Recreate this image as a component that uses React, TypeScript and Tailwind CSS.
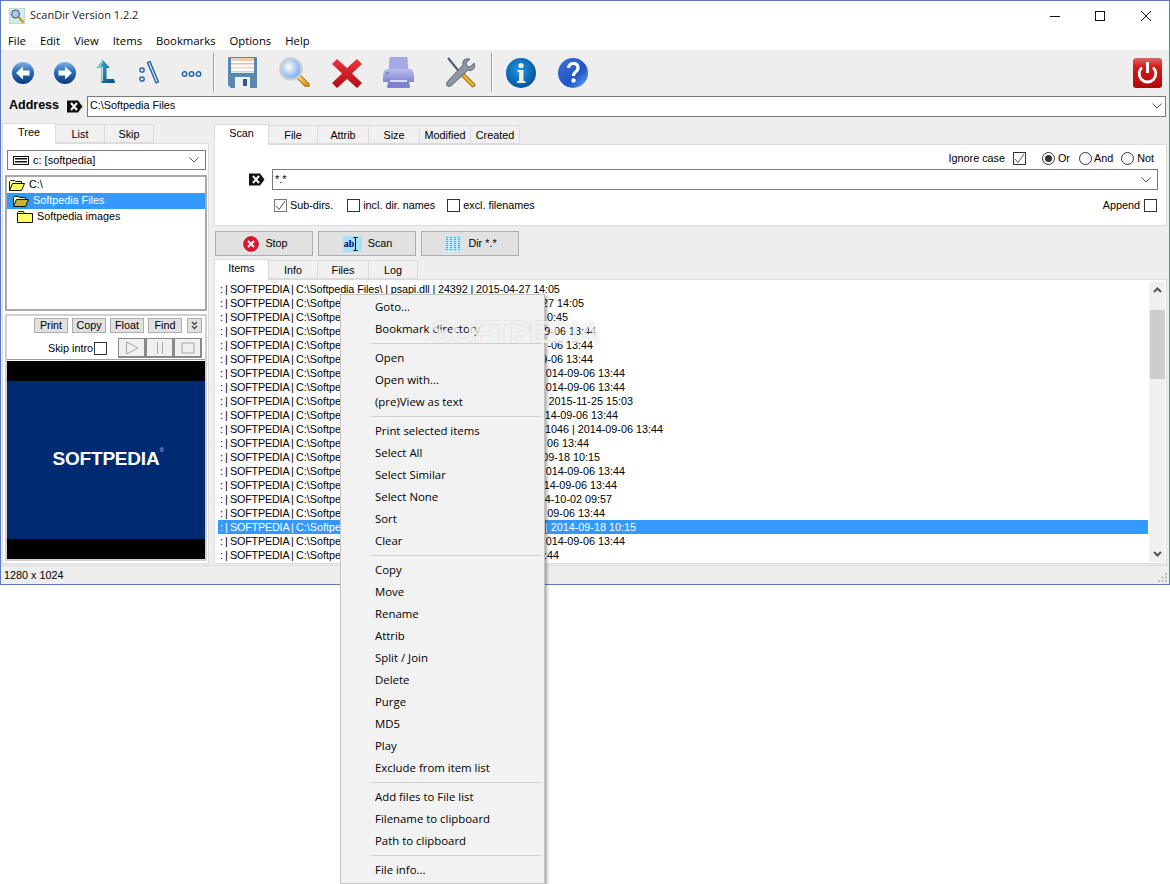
import React from "react";

const sys = "font-['Open_Sans',sans-serif]";
const ui = "font-['Liberation_Sans',sans-serif]";

function Ball({ flip }: { flip?: boolean }) {
  const id = flip ? "ballb" : "balla";
  return (
    <svg width="22" height="22" viewBox="0 0 22 22" className="shrink-0">
      <defs>
        <linearGradient id={id} x1="0" y1="0" x2="0" y2="1">
          <stop offset="0" stopColor="#7fb2e4" />
          <stop offset="0.45" stopColor="#2a6fb8" />
          <stop offset="1" stopColor="#0b3a78" />
        </linearGradient>
      </defs>
      <circle cx="11" cy="11" r="11" fill={`url(#${id})`} />
      <g transform={flip ? "translate(22 0) scale(-1 1)" : undefined}>
        <path d="M11 4.5 L4 11 L11 17.5 L11 13.5 L17.5 13.5 L17.5 8.5 L11 8.5 Z" fill="#fff" />
      </g>
    </svg>
  );
}

function UpIcon() {
  return (
    <svg width="19" height="24" viewBox="0 0 19 24" className="shrink-0">
      <defs>
        <linearGradient id="upg" x1="0" y1="0" x2="1" y2="1">
          <stop offset="0" stopColor="#39b4cf" />
          <stop offset="1" stopColor="#0c4a7d" />
        </linearGradient>
      </defs>
      <path d="M7 0 L14 8 L10.5 8 L10.5 19 L18 19 L19 23 L5.5 23 L5.5 8 L0.5 8 Z" fill="url(#upg)" />
      <path d="M7 2 L2.5 7 L6.5 7 L6.5 21" stroke="#bfe8f2" strokeWidth="1" fill="none" />
    </svg>
  );
}

function RootIcon() {
  return (
    <svg width="20" height="23" viewBox="0 0 20 23" className="shrink-0">
      <circle cx="3" cy="9" r="2.2" fill="#cfe2f5" stroke="#1f5c98" strokeWidth="1.3" />
      <circle cx="3" cy="18" r="2.2" fill="#cfe2f5" stroke="#1f5c98" strokeWidth="1.3" />
      <path d="M8.5 1.5 L11 0.5 L19.5 21 L17 22 Z" fill="#cfe2f5" stroke="#1f5c98" strokeWidth="1.3" />
    </svg>
  );
}

function DotsIcon() {
  return (
    <svg width="21" height="8" viewBox="0 0 21 8" className="shrink-0">
      {[3.5, 10.5, 17.5].map((x) => (
        <circle key={x} cx={x} cy="4" r="2.3" fill="#cfe2f5" stroke="#1f5c98" strokeWidth="1.3" />
      ))}
    </svg>
  );
}

function Floppy() {
  return (
    <svg width="29" height="31" viewBox="0 0 29 31" className="shrink-0">
      <path d="M0 1 Q0 0 1 0 H28 Q29 0 29 1 V31 H3 L0 28 Z" fill="#5a86b0" />
      <rect x="3" y="1" width="23" height="15" fill="#fff" />
      <rect x="3" y="1" width="23" height="3" fill="#f6c9b4" />
      <rect x="3" y="6" width="23" height="1.5" fill="#f3b8a0" />
      <rect x="3" y="10" width="23" height="1.5" fill="#f6d2c2" />
      <rect x="3" y="14" width="23" height="1.5" fill="#c4d3dd" />
      <rect x="7" y="20" width="15" height="11" fill="#eef2f6" />
      <rect x="15" y="22" width="4" height="7" fill="#2e5a85" />
    </svg>
  );
}

function Magnifier() {
  return (
    <svg width="31" height="30" viewBox="0 0 31 30" className="shrink-0">
      <defs>
        <radialGradient id="glass" cx="0.4" cy="0.4" r="0.7">
          <stop offset="0" stopColor="#fff" />
          <stop offset="1" stopColor="#5c9cec" />
        </radialGradient>
        <linearGradient id="hand" x1="0" y1="0" x2="1" y2="1">
          <stop offset="0" stopColor="#ffe48a" />
          <stop offset="1" stopColor="#d98e10" />
        </linearGradient>
      </defs>
      <path d="M19 19 L28 28" stroke="#a8761a" strokeWidth="5.5" strokeLinecap="round" />
      <path d="M19 19 L28 28" stroke="url(#hand)" strokeWidth="3.5" strokeLinecap="round" />
      <circle cx="12" cy="12" r="10.5" fill="url(#glass)" stroke="#c9cdd6" strokeWidth="2.5" />
    </svg>
  );
}

function RedX() {
  return (
    <svg width="30" height="29" viewBox="0 0 30 29" className="shrink-0">
      <defs>
        <linearGradient id="redx" x1="0" y1="0" x2="0" y2="1">
          <stop offset="0" stopColor="#e8353c" />
          <stop offset="1" stopColor="#b40d15" />
        </linearGradient>
      </defs>
      <path d="M5 0 L15 9 L25 0 L30 5 L20 14.5 L30 24 L25 29 L15 20 L5 29 L0 24 L10 14.5 L0 5 Z" fill="url(#redx)" />
    </svg>
  );
}

function Printer() {
  return (
    <svg width="31" height="31" viewBox="0 0 31 31" className="shrink-0">
      <defs>
        <linearGradient id="prn" x1="0" y1="0" x2="0" y2="1">
          <stop offset="0" stopColor="#b9bdf0" />
          <stop offset="1" stopColor="#7f86cf" />
        </linearGradient>
      </defs>
      <path d="M7 0 H24 L25 13 H6 Z" fill="#a5aae6" stroke="#8d93d4" strokeWidth="0.5" />
      <path d="M3 12 H28 Q31 14 31 21 V25 H0 V21 Q0 14 3 12 Z" fill="url(#prn)" />
      <circle cx="4.5" cy="16" r="1.2" fill="#2f9e6a" />
      <path d="M5 25 H26 L27 30 Q27 31 26 31 H5 Q4 31 4 30 Z" fill="#7c82cb" />
      <rect x="7" y="23" width="17" height="2" fill="#d8daf6" />
    </svg>
  );
}

function Tools() {
  return (
    <svg width="31" height="31" viewBox="0 0 31 31" className="shrink-0">
      <path d="M3 1 L17 18" stroke="#4d5a66" strokeWidth="2" />
      <path d="M17 17 L28 28" stroke="#8a5a0a" strokeWidth="4.5" strokeLinecap="round" />
      <path d="M17 17 L28 28" stroke="#f0b820" strokeWidth="2.8" strokeLinecap="round" />
      <path d="M25 2 L21 6 L22 9 L25 10 L29 6 Q31 11 27 13 Q25 14 23 13 L6.5 28.5 Q4 30.5 2.2 28.8 Q0.5 27 2.5 24.5 L18 8 Q17 5 19 3 Q21 1 25 2 Z" fill="#8d98a3" stroke="#45515c" strokeWidth="0.8" />
    </svg>
  );
}

function Info() {
  return (
    <svg width="30" height="30" viewBox="0 0 30 30" className="shrink-0">
      <defs>
        <radialGradient id="inf" cx="0.45" cy="0.4" r="0.7">
          <stop offset="0" stopColor="#1c9be8" />
          <stop offset="1" stopColor="#02468f" />
        </radialGradient>
      </defs>
      <circle cx="15" cy="15" r="15" fill="url(#inf)" />
      <circle cx="15" cy="7.5" r="2.6" fill="#f8eccb" />
      <path d="M11.5 12 H17.5 V23 H19.5 V25 H11 V23 H13 V14 H11.5 Z" fill="#f8eccb" />
    </svg>
  );
}

function Help() {
  return (
    <svg width="30" height="30" viewBox="0 0 30 30" className="shrink-0">
      <defs>
        <linearGradient id="hlp" x1="0" y1="0" x2="1" y2="1">
          <stop offset="0" stopColor="#3d70d0" />
          <stop offset="0.6" stopColor="#1f55c8" />
          <stop offset="1" stopColor="#6fa8ea" />
        </linearGradient>
      </defs>
      <circle cx="15" cy="15" r="15" fill="url(#hlp)" />
      <path d="M10.5 10 Q11 5.5 15.5 5.5 Q20 5.5 20 9.8 Q20 12.5 17.5 14 Q15.5 15.2 15.5 18" fill="none" stroke="#fff" strokeWidth="3.2" />
      <circle cx="15.5" cy="22.5" r="2.2" fill="#fff" />
    </svg>
  );
}

function Power() {
  return (
    <svg width="29" height="30" viewBox="0 0 29 30" className="shrink-0">
      <defs>
        <linearGradient id="pw" x1="0" y1="0" x2="0" y2="1">
          <stop offset="0" stopColor="#d9686a" />
          <stop offset="0.3" stopColor="#e01616" />
          <stop offset="1" stopColor="#b00808" />
        </linearGradient>
      </defs>
      <rect width="29" height="30" rx="3" fill="url(#pw)" />
      <path d="M9 9.5 A8.3 8.3 0 1 0 20 9.5" fill="none" stroke="#fff" strokeWidth="2.8" />
      <rect x="13" y="4" width="3" height="11" fill="#fff" />
    </svg>
  );
}

function Tag() {
  return (
    <svg width="16" height="13" viewBox="0 0 16 13" className="shrink-0">
      <path d="M0 0.5 H11 L15.5 6.5 L11 12.5 H0 Z" fill="#111" />
      <path d="M4 3 L10 10 M10 3 L4 10" stroke="#fff" strokeWidth="2" />
    </svg>
  );
}

function Chevron({ className }: { className?: string }) {
  return (
    <svg width="10" height="6" viewBox="0 0 10 6" className={className}>
      <path d="M0.5 0.5 L5 5 L9.5 0.5" fill="none" stroke="#555" strokeWidth="1" />
    </svg>
  );
}

function Drive() {
  return (
    <svg width="16" height="9" viewBox="0 0 16 9" className="shrink-0">
      <rect x="0.5" y="0.5" width="15" height="8" fill="#fff" stroke="#111" />
      <rect x="2" y="2" width="12" height="1.5" fill="#111" />
      <rect x="2" y="5" width="12" height="1.5" fill="#111" />
    </svg>
  );
}

function FolderOpen({ dark }: { dark?: boolean }) {
  return (
    <svg width="16" height="11" viewBox="0 0 16 11" className="shrink-0">
      <path d="M0.5 10.5 V1.5 L1.5 0.5 H5.5 L6.5 1.5 H12.5 V3.5" fill="#ffff99" stroke="#111" />
      <path d="M0.5 10.5 L3.5 3.5 H15.5 L12.5 10.5 Z" fill={dark ? "#c8b040" : "#ffff66"} stroke="#111" />
    </svg>
  );
}

function FolderClosed() {
  return (
    <svg width="16" height="12" viewBox="0 0 16 12" className="shrink-0">
      <path d="M0.5 11.5 V1.5 L1.5 0.5 H6.5 L7.5 2.5 H15.5 V11.5 Z" fill="#ffff66" stroke="#111" />
      <path d="M0.5 2.5 H15.5" stroke="#111" />
    </svg>
  );
}

function Check({ on, soft }: { on?: boolean; soft?: boolean }) {
  return (
    <span className={`w-[13px] h-[13px] shrink-0 bg-white border flex items-center justify-center ${soft ? "border-[#777777]" : "border-[#333333]"}`}>
      {on && (
        <svg width="11" height="11" viewBox="0 0 11 11">
          <path d="M1 6 L4 9.5 L10 1" fill="none" stroke="#555" strokeWidth="1" />
        </svg>
      )}
    </span>
  );
}

function Radio({ on }: { on?: boolean }) {
  return (
    <span className="w-[13px] h-[13px] shrink-0 rounded-full bg-white border border-[#333333] flex items-center justify-center">
      {on && <span className="w-[7px] h-[7px] rounded-full bg-[#333333]" />}
    </span>
  );
}

function Tab({ label, active, w }: { label: string; active?: boolean; w: string }) {
  return active ? (
    <div className={`${w} h-[21px] -mb-px relative z-10 bg-white border border-[#dcdcdc] border-b-0 flex items-center justify-center pb-[3px]`}>{label}</div>
  ) : (
    <div className={`${w} h-[19px] bg-[#f0f0f0] border border-[#dcdcdc] border-l-0 first:border-l flex items-center justify-center pt-[1px]`}>{label}</div>
  );
}

function GrayBtn({ label, w }: { label: string; w: string }) {
  return <div className={`${w} h-[15px] bg-[#e1e1e1] border border-[#adadad] flex items-center justify-center`}>{label}</div>;
}

function MediaBtn({ children }: { children: React.ReactNode }) {
  return <div className="w-[28px] h-[20px] bg-[#f0f0f0] border border-[#8a8a8a] border-b-2 border-r-2 flex items-center justify-center">{children}</div>;
}

function CmdBtn({ icon, label, pad }: { icon: React.ReactNode; label: string; pad: string }) {
  return (
    <div className={`w-[98px] h-[25px] bg-[#e1e1e1] border border-[#adadad] flex items-center justify-center gap-[6px] ${pad}`}>
      {icon}
      <span>{label}</span>
    </div>
  );
}

function Prefix() {
  return <span className="tracking-[-0.2px] [word-spacing:-0.5px]">: | SOFTPEDIA | </span>;
}

const rows: { end: number; tail: string }[] = [
  { end: 561, tail: "" },
  { end: 584, tail: "27 14:05" },
  { end: 568, tail: "0:45" },
  { end: 596, tail: "9-06 13:44" },
  { end: 593, tail: "-06 13:44" },
  { end: 593, tail: "9-06 13:44" },
  { end: 625, tail: "014-09-06 13:44" },
  { end: 625, tail: "014-09-06 13:44" },
  { end: 633, tail: "2015-11-25 15:03" },
  { end: 618, tail: "14-09-06 13:44" },
  { end: 663, tail: "1046 | 2014-09-06 13:44" },
  { end: 589, tail: "06 13:44" },
  { end: 600, tail: "09-18 10:15" },
  { end: 625, tail: "014-09-06 13:44" },
  { end: 617, tail: "14-09-06 13:44" },
  { end: 612, tail: "4-10-02 09:57" },
  { end: 605, tail: "09-06 13:44" },
  { end: 636, tail: "| 2014-09-18 10:15" },
  { end: 625, tail: "014-09-06 13:44" },
  { end: 559, tail: ":44" },
];

const menu: string[][] = [
  ["Goto...", "Bookmark directory"],
  ["Open", "Open with...", "(pre)View as text"],
  ["Print selected items", "Select All", "Select Similar", "Select None", "Sort", "Clear"],
  ["Copy", "Move", "Rename", "Attrib", "Split / Join", "Delete", "Purge", "MD5", "Play", "Exclude from item list"],
  ["Add files to File list", "Filename to clipboard", "Path to clipboard"],
  ["File info..."],
];

export default function App() {
  return (
    <div className={`relative w-[1170px] h-[884px] bg-white overflow-hidden text-black ${ui} text-[10.8px]`}>
      <div className="w-[1170px] h-[585px] border border-[#5b7cbb] flex flex-col bg-[#eeeeee]">
        {/* title */}
        <div className={`h-[29px] bg-white flex items-center ${sys} text-[11px] text-[#222222]`}>
          <svg width="16" height="16" viewBox="0 0 16 16" className="ml-[8px] shrink-0">
            <rect width="16" height="16" fill="#cfeee6" stroke="#8ab" strokeWidth="0.5" />
            <circle cx="6.5" cy="6" r="4" fill="#a8c8f0" stroke="#445" />
            <path d="M9.5 9 L14.5 14.5" stroke="#c8961a" strokeWidth="2.4" />
          </svg>
          <span className="ml-[5px]">ScanDir Version 1.2.2</span>
          <div className="ml-auto flex items-center">
            <svg width="10" height="10" viewBox="0 0 10 10" className="mr-[35px]"><path d="M0 5.5 H10" stroke="#111" /></svg>
            <svg width="10" height="10" viewBox="0 0 10 10" className="mr-[36px]"><rect x="0.5" y="0.5" width="9" height="9" fill="none" stroke="#111" /></svg>
            <svg width="10" height="10" viewBox="0 0 10 10" className="mr-[18px]"><path d="M0 0 L10 10 M10 0 L0 10" stroke="#111" /></svg>
          </div>
        </div>
        {/* menu bar */}
        <div className={`h-[20px] bg-white flex items-center pl-[7px] pt-[2px] gap-[14px] ${sys} text-[11.3px]`}>
          {["File", "Edit", "View", "Items", "Bookmarks", "Options", "Help"].map((m) => (
            <span key={m}>{m}</span>
          ))}
        </div>
        {/* toolbar */}
        <div className="h-[45px] flex items-center shrink-0">
          <div className="ml-[11px]"><Ball /></div>
          <div className="ml-[20px]"><Ball flip /></div>
          <div className="ml-[20px] -mt-[1px]"><UpIcon /></div>
          <div className="ml-[24px] -mt-[1px]"><RootIcon /></div>
          <div className="ml-[22px] mt-[2px]"><DotsIcon /></div>
          <div className="ml-[11px] w-[1px] h-[39px] bg-[#a0a0a0] shadow-[1px_0_0_#ffffff]" />
          <div className="ml-[14px] -mt-[1px]"><Floppy /></div>
          <div className="ml-[22px] -mt-[2px]"><Magnifier /></div>
          <div className="ml-[22px] mt-[1px]"><RedX /></div>
          <div className="ml-[21px] -mt-[1px]"><Printer /></div>
          <div className="ml-[31px] -mt-[1px]"><Tools /></div>
          <div className="ml-[15px] w-[1px] h-[39px] bg-[#a0a0a0] shadow-[1px_0_0_#ffffff]" />
          <div className="ml-[14px]"><Info /></div>
          <div className="ml-[22px]"><Help /></div>
          <div className="ml-auto mr-[7px]"><Power /></div>
        </div>
        {/* address */}
        <div className="h-[22px] flex items-center shrink-0">
          <span className="ml-[8px] w-[50px] font-bold text-[12.5px] leading-none -mt-[1px] whitespace-nowrap">Address</span>
          <div className="ml-[8px]"><Tag /></div>
          <div className="ml-[4px] w-[1079px] h-[21px] bg-white border border-[#7a7a7a] flex items-center pl-[2px] pr-[3px]">
            <span className="-mt-[1px]">C:\Softpedia Files</span>
            <Chevron className="ml-auto" />
          </div>
        </div>
        {/* main */}
        <div className="flex mt-[6px] h-[441px] shrink-0 pl-[1px]">
          {/* left */}
          <div className="w-[207px] flex flex-col">
            <div className="flex items-end h-[20px] relative">
              <Tab label="Tree" active w="w-[54px]" />
              <Tab label="List" w="w-[49px]" />
              <Tab label="Skip" w="w-[49px]" />
            </div>
            <div className="flex-1 bg-white border border-[#dcdcdc] flex flex-col pl-[2px]">
              <div className="ml-[2px] mt-[6px] w-[199px] h-[20px] border border-[#7a7a7a] flex items-center pl-[5px] pr-[6px] shrink-0 text-[11px]">
                <Drive />
                <span className="ml-[4px]">c: [softpedia]</span>
                <Chevron className="ml-auto" />
              </div>
              <div className="mt-[5px] w-[202px] h-[136px] border-2 border-[#a9a9a9] shrink-0">
                <div className="h-[16px] flex items-center pl-[2px]"><FolderOpen /><span className="ml-[4px] mb-[2px]">C:\</span></div>
                <div className="h-[16px] flex items-center pl-[6px] bg-[#3399ff] text-white"><FolderOpen dark /><span className="ml-[4px] mb-[2px]">Softpedia Files</span></div>
                <div className="h-[16px] flex items-center pl-[10px]"><FolderClosed /><span className="ml-[4px] mb-[2px]">Softpedia images</span></div>
              </div>
              <div className="mt-[3px] w-[202px] flex-1 mb-[2px] border-2 border-[#d0d0d0] flex flex-col">
                <div className="flex items-center mt-[2px] pl-[27px] gap-[4px]">
                  <GrayBtn label="Print" w="w-[34px]" />
                  <GrayBtn label="Copy" w="w-[34px]" />
                  <GrayBtn label="Float" w="w-[34px]" />
                  <GrayBtn label="Find" w="w-[34px]" />
                  <div className="w-[15px] h-[15px] ml-[1px] bg-[#e1e1e1] border border-[#adadad] flex flex-col items-center justify-center">
                    <svg width="7" height="9" viewBox="0 0 7 9">
                      <path d="M1 1 L3.5 3.5 L6 1 M1 5 L3.5 7.5 L6 5" fill="none" stroke="#444" strokeWidth="1.3" />
                    </svg>
                  </div>
                </div>
                <div className="flex items-center mt-[5px] pl-[41px]">
                  <span>Skip intro</span>
                  <div className="ml-[1px]"><Check /></div>
                  <div className="flex ml-[11px]">
                    <MediaBtn>
                      <svg width="14" height="14" viewBox="0 0 14 14"><path d="M1.5 1 V13 L13 7 Z" fill="none" stroke="#a8a8a8" /></svg>
                    </MediaBtn>
                    <MediaBtn>
                      <svg width="10" height="14" viewBox="0 0 10 14"><path d="M2.5 1 V13 M7.5 1 V13" stroke="#a8a8a8" /></svg>
                    </MediaBtn>
                    <MediaBtn>
                      <svg width="14" height="12" viewBox="0 0 14 12"><rect x="1" y="1" width="12" height="10" fill="none" stroke="#a8a8a8" /></svg>
                    </MediaBtn>
                  </div>
                </div>
                <div className="mt-[1px] h-[1px] bg-[#a0a0a0] shrink-0" />
                <div className="flex-1 mt-[1px] bg-black flex flex-col justify-center">
                  <div className="h-[158px] bg-[#002a72] flex items-center justify-center">
                    <span className="relative -mt-[3px] font-bold text-[19px] tracking-[-0.2px] leading-none text-white font-['Liberation_Sans',sans-serif]">
                      SOFTPEDIA
                      <span className="absolute -right-[4px] -top-[1px] text-[5px] font-normal">©</span>
                    </span>
                  </div>
                </div>
              </div>
            </div>
          </div>
          {/* right */}
          <div className="w-[953px] ml-[5px] flex flex-col">
            <div className="flex items-end h-[21px] relative">
              <Tab label="Scan" active w="w-[55px]" />
              <Tab label="File" w="w-[49px]" />
              <Tab label="Attrib" w="w-[51px]" />
              <Tab label="Size" w="w-[51px]" />
              <Tab label="Modified" w="w-[51px]" />
              <Tab label="Created" w="w-[49px]" />
            </div>
            <div className="h-[82px] bg-white border border-[#dcdcdc] flex flex-col shrink-0">
              <div className="h-[24px] flex items-center justify-end pr-[12px] pt-[2px]">
                <span>Ignore case</span>
                <div className="ml-[8px]"><Check on /></div>
                <div className="ml-[16px] flex items-center gap-[3px]"><Radio on /><span>Or</span></div>
                <div className="ml-[9px] flex items-center gap-[2px]"><Radio /><span>And</span></div>
                <div className="ml-[8px] flex items-center gap-[3px]"><Radio /><span>Not</span></div>
              </div>
              <div className="flex items-center h-[21px]">
                <div className="ml-[34px]"><Tag /></div>
                <div className="ml-[7px] w-[886px] h-[21px] border border-[#7a7a7a] flex items-center pl-[2px] pr-[6px]">
                  <span>*.*</span>
                  <Chevron className="ml-auto" />
                </div>
              </div>
              <div className="flex items-center mt-[7px] pl-[59px]">
                <Check on soft />
                <span className="ml-[3px]">Sub-dirs.</span>
                <div className="ml-[14px]"><Check /></div>
                <span className="ml-[3px]">incl. dir. names</span>
                <div className="ml-[12px]"><Check /></div>
                <span className="ml-[3px]">excl. filenames</span>
                <span className="ml-auto">Append</span>
                <div className="ml-[4px] mr-[9px]"><Check /></div>
              </div>
            </div>
            <div className="flex gap-[5px] mt-[5px] pl-[1px] shrink-0">
              <CmdBtn
                label="Stop"
                pad="pl-[3px]"
                icon={
                  <svg width="16" height="16" viewBox="0 0 16 16">
                    <circle cx="8" cy="8" r="7.5" fill="#e3132b" stroke="#a01020" strokeWidth="0.6" />
                    <path d="M5 5 L11 11 M11 5 L5 11" stroke="#fff" strokeWidth="2" />
                  </svg>
                }
              />
              <CmdBtn
                label="Scan"
                pad="pl-[1px]"
                icon={
                  <span className="w-[19px] h-[16px] bg-[#a6e1f7] flex items-center text-[#000080] font-bold text-[10px] font-['Liberation_Serif',serif] leading-none pl-[1px]">
                    ab
                    <svg width="5" height="14" viewBox="0 0 5 14" className="-ml-[1px]"><path d="M0.5 0.5 H4.5 M2.5 0.5 V13.5 M0.5 13.5 H4.5" stroke="#000" fill="none" /></svg>
                  </span>
                }
              />
              <CmdBtn
                label="Dir *.*"
                pad="pl-[2px]"
                icon={
                  <svg width="17" height="16" viewBox="0 0 17 16">
                    <rect width="17" height="16" fill="#bfeaf8" />
                    {[2, 6, 10, 14].map((x) => (
                      <path key={x} d={`M${x} 1 V15`} stroke="#2a8fb8" strokeWidth="1.5" strokeDasharray="1 1" />
                    ))}
                  </svg>
                }
              />
            </div>
            <div className="flex items-end h-[20px] mt-[3px] relative shrink-0">
              <Tab label="Items" active w="w-[55px]" />
              <Tab label="Info" w="w-[49px]" />
              <Tab label="Files" w="w-[51px]" />
              <Tab label="Log" w="w-[49px]" />
            </div>
            <div className="flex-1 bg-white border border-[#dcdcdc] relative min-h-0 flex pl-[3px] pt-[2px]">
              <div className="w-[930px] flex flex-col">
                {rows.map((r, i) => (
                  <div key={i} className={`h-[14px] shrink-0 flex items-center pl-[2px] leading-none whitespace-nowrap ${i === 17 ? "bg-[#3399ff] text-white" : ""}`}>
                    {r.tail === "" ? (
                      <span>
                        <Prefix />
                        <span className="tracking-[-0.1px]">C:\Softpedia Files\ | psapi.dll | 24392 | 2015-04-27 14:05</span>
                      </span>
                    ) : (
                      <div className="flex justify-between" style={{ width: r.end - 220 }}>
                        <span>
                          <Prefix />
                          C:\Softpedia Files\
                        </span>
                        <span>{r.tail}</span>
                      </div>
                    )}
                  </div>
                ))}
              </div>
              <div className="ml-[1px] w-[16px] h-[280px] bg-[#f0f0f0] flex flex-col items-center">
                <svg width="9" height="6" viewBox="0 0 9 6" className="mt-[5px]"><path d="M1 5 L4.5 1.5 L8 5" fill="none" stroke="#555" strokeWidth="2" /></svg>
                <div className="mt-[17px] w-[15px] h-[69px] bg-[#cdcdcd]" />
                <svg width="9" height="6" viewBox="0 0 9 6" className="mt-auto mb-[5px]"><path d="M1 1 L4.5 4.5 L8 1" fill="none" stroke="#555" strokeWidth="2" /></svg>
              </div>
            </div>
          </div>
        </div>
        {/* status */}
        <div className="mt-[1px] flex-1 border-t border-[#dcdcdc] flex items-center pl-[3px] relative">
          1280 x 1024
          <svg width="10" height="10" viewBox="0 0 10 10" className="absolute right-[1px] bottom-[1px]">
            <g fill="#c0c0c0">
              <rect x="7" y="0" width="2" height="2" />
              <rect x="3.5" y="3.5" width="2" height="2" />
              <rect x="7" y="3.5" width="2" height="2" />
              <rect x="0" y="7" width="2" height="2" />
              <rect x="3.5" y="7" width="2" height="2" />
              <rect x="7" y="7" width="2" height="2" />
            </g>
          </svg>
        </div>
      </div>

      {/* context menu */}
      <div className={`absolute left-[340px] top-[294px] w-[205px] h-[590px] bg-[#f2f2f2] border border-[#c4c4c4] shadow-[2px_2px_3px_rgba(0,0,0,0.35)] py-[1px] ${sys} text-[11.4px] z-20`}>
        {menu.map((g, gi) => (
          <div key={gi}>
            {gi > 0 && (
              <div className="h-[7px] flex items-center pl-[30px] pr-[3px]">
                <div className="w-full h-[1px] bg-[#d0d0d0]" />
              </div>
            )}
            {g.map((m) => (
              <div key={m} className="h-[22px] flex items-center pl-[34px]">{m}</div>
            ))}
          </div>
        ))}
      </div>

      {/* watermark */}
      <div className="absolute left-[431px] top-[317px] z-30 font-bold text-[31px] tracking-[-1px] leading-none text-white/70 [text-shadow:0_0_2px_rgba(150,150,150,0.4)] font-['Liberation_Sans',sans-serif] pointer-events-none">
        SOFTPEDIA
      </div>
    </div>
  );
}
